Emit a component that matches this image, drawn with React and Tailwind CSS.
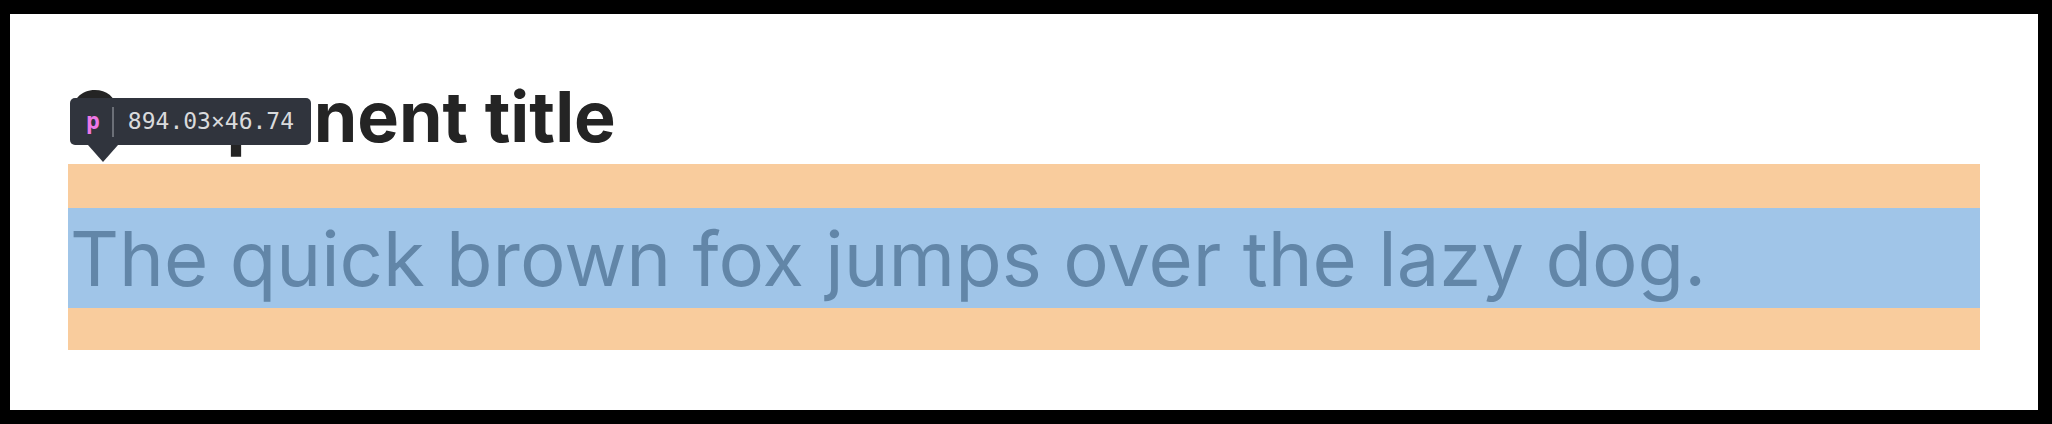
const InspectTooltip = () => (
  <div className="absolute left-[60px] top-[84px] flex flex-col items-start">
    <div className="flex items-center h-[47px] pl-[16px] pr-[17px] rounded-[5px] bg-[#30343d] font-['DejaVu_Sans_Mono',monospace] text-[23px]">
      <span className="text-[#ee78e6] font-bold">p</span>
      <span className="ml-[12px] mr-[14px] h-[30px] w-[2px] bg-[#6b6f77]" />
      <span className="text-[#d9dadc]">894.03×46.74</span>
    </div>
    <div className="ml-[18px] w-0 h-0 border-l-[15px] border-r-[15px] border-t-[17px] border-l-transparent border-r-transparent border-t-[#30343d]" />
  </div>
);

const App = () => {
  return (
    <div className="relative w-[2052px] h-[424px] bg-white border-black border-t-[14px] border-l-[10px] border-r-[14px] border-b-[14px] font-['Inter',sans-serif]">
      <div className="px-[58px] pt-[69px]">
        {/* Heading */}
        <h2 className="text-[70px] leading-[68px] font-bold text-[#242424] mb-[13px]">
          Component title
        </h2>

        {/* Highlighted paragraph: margin (orange) and content (blue) */}
        <div className="bg-[#f9cc9d] pt-[44px] pb-[42px]">
          <p className="h-[100px] bg-[#a0c5e8] text-[76px] leading-[100px] text-[#6286a8] pl-[2px] whitespace-nowrap">
            The quick brown fox jumps over the lazy dog.
          </p>
        </div>
      </div>

      <InspectTooltip />
    </div>
  );
};

export default App;
